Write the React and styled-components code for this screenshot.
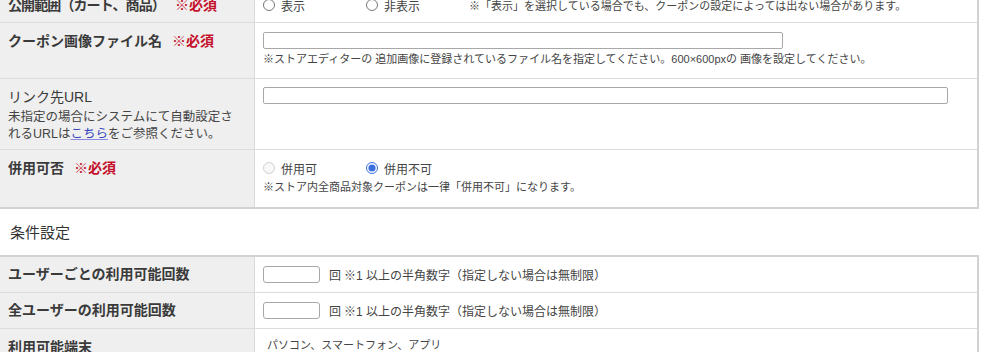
import React from "react";
import styled, { createGlobalStyle } from "styled-components";

const GlobalStyle = createGlobalStyle`
  html, body {
    margin: 0;
    padding: 0;
    background: #ffffff;
  }
  body {
    font-family: "Liberation Sans", "Noto Sans CJK JP", sans-serif;
    color: #333333;
    overflow: hidden;
  }
`;

const App = () => {
  return (
    <Page>
      <GlobalStyle />
      <FormTable>
        <Row>
          <LabelCell>
            <LabelTitle $tight>
              公開範囲（カート、商品）<Required>※必須</Required>
            </LabelTitle>
          </LabelCell>
          <ValueCell>
            <RadioLine>
              <RadioLabel>
                <Radio type="radio" name="open" />
                表示
              </RadioLabel>
              <RadioLabel>
                <Radio type="radio" name="open" />
                非表示
              </RadioLabel>
              <Note>
                ※「表示」を選択している場合でも、クーポンの設定によっては出ない場合があります。
              </Note>
            </RadioLine>
          </ValueCell>
        </Row>
        <Row>
          <LabelCell>
            <LabelTitle>
              クーポン画像ファイル名<Required>※必須</Required>
            </LabelTitle>
          </LabelCell>
          <ValueCell $top={9} $bottom={11}>
            <TextInput $width={520} />
            <NoteBlock>
              ※ストアエディターの 追加画像に登録されているファイル名を指定してください。600×600pxの
              画像を設定してください。
            </NoteBlock>
          </ValueCell>
        </Row>
        <Row>
          <LabelCell $bottom={6}>
            <LabelTitle $light>リンク先URL</LabelTitle>
            <LabelDesc>
              未指定の場合にシステムにて自動設定さ
              <br />
              れるURLは<DescLink href="#">こちら</DescLink>をご参照ください。
            </LabelDesc>
          </LabelCell>
          <ValueCell $top={8}>
            <TextInput $width={685} />
          </ValueCell>
        </Row>
        <Row $last>
          <LabelCell>
            <LabelTitle>
              併用可否<Required>※必須</Required>
            </LabelTitle>
          </LabelCell>
          <ValueCell $top={8} $bottom={12}>
            <RadioLine>
              <RadioLabel>
                <Radio type="radio" name="combo" disabled />
                併用可
              </RadioLabel>
              <RadioLabel>
                <Radio type="radio" name="combo" defaultChecked />
                併用不可
              </RadioLabel>
            </RadioLine>
            <NoteBlock $gap={1}>
              ※ストア内全商品対象クーポンは一律「併用不可」になります。
            </NoteBlock>
          </ValueCell>
        </Row>
      </FormTable>

      <SectionTitle>条件設定</SectionTitle>

      <FormTable $top>
        <Row>
          <LabelCell $top={7} $bottom={8}>
            <LabelTitle>ユーザーごとの利用可能回数</LabelTitle>
          </LabelCell>
          <CountCell>
            <SmallInput />
            <Unit>回</Unit>
            <CountNote>※1 以上の半角数字（指定しない場合は無制限）</CountNote>
          </CountCell>
        </Row>
        <Row>
          <LabelCell $top={7} $bottom={8}>
            <LabelTitle>全ユーザーの利用可能回数</LabelTitle>
          </LabelCell>
          <CountCell>
            <SmallInput />
            <Unit>回</Unit>
            <CountNote>※1 以上の半角数字（指定しない場合は無制限）</CountNote>
          </CountCell>
        </Row>
        <Row>
          <LabelCell>
            <LabelTitle>利用可能端末</LabelTitle>
          </LabelCell>
          <ValueCell $top={8}>
            <PlainText>パソコン、スマートフォン、アプリ</PlainText>
          </ValueCell>
        </Row>
      </FormTable>
    </Page>
  );
};

export default App;

const Page = styled.div`
  width: 1000px;
  margin-top: -13px;
`;

const FormTable = styled.div`
  width: 977px;
  border-right: 2px solid #d2d2d2;
  border-bottom: 2px solid #d2d2d2;
  border-top: ${(p) => (p.$top ? "2px solid #d2d2d2" : "none")};
`;

const Row = styled.div`
  display: grid;
  grid-template-columns: 255px 1fr;
  border-bottom: ${(p) => (p.$last ? "none" : "1px solid #dcdcdc")};
`;

const LabelCell = styled.div`
  background: #efefef;
  border-right: 1px solid #dadada;
  padding: ${(p) => p.$top ?? 8}px 8px ${(p) => p.$bottom ?? 7}px 8px;
`;

const LabelTitle = styled.div`
  font-size: 14px;
  line-height: 20px;
  font-weight: ${(p) => (p.$light ? "normal" : "bold")};
  letter-spacing: ${(p) => (p.$tight ? "-0.9px" : "normal")};
  color: #3a3a3a;
  white-space: nowrap;
`;

const Required = styled.span`
  color: #c4102a;
  margin-left: 10px;
  letter-spacing: normal;
`;

const LabelDesc = styled.div`
  margin-top: 2px;
  font-size: 12.5px;
  line-height: 17px;
  color: #444444;
`;

const DescLink = styled.a`
  color: #3344bb;
  text-decoration: underline;
  text-decoration-color: #8a8ae0;
`;

const ValueCell = styled.div`
  background: #ffffff;
  padding: ${(p) => p.$top ?? 8}px 8px ${(p) => p.$bottom ?? 7}px 8px;
`;

const RadioLine = styled.div`
  display: flex;
  align-items: center;
  height: 20px;
`;

const RadioLabel = styled.label`
  display: flex;
  align-items: center;
  width: 103px;
  font-size: 12px;
  color: #444444;
`;

const Radio = styled.input`
  width: 12px;
  height: 12px;
  margin: 0 6px 0 0;
  accent-color: #3a6fe0;
`;

const Note = styled.span`
  font-size: 11px;
  color: #444444;
  white-space: nowrap;
`;

const NoteBlock = styled.div`
  margin-top: ${(p) => p.$gap ?? 2}px;
  font-size: 11px;
  line-height: 16px;
  color: #444444;
  white-space: nowrap;
`;

const TextInput = styled.input`
  display: block;
  box-sizing: border-box;
  width: ${(p) => p.$width}px;
  height: 17px;
  margin: 0;
  padding: 0 3px;
  border: 1px solid #a8a8a8;
  border-radius: 2px;
  background: #ffffff;
`;

const SectionTitle = styled.div`
  margin: 14px 0 12px 10px;
  font-size: 15px;
  line-height: 20px;
  color: #333333;
`;

const CountCell = styled.div`
  display: flex;
  align-items: center;
  padding: 0 8px;
  background: #ffffff;
`;

const SmallInput = styled.input`
  box-sizing: border-box;
  width: 57px;
  height: 17px;
  margin: 0 9px 0 0;
  padding: 0 3px;
  border: 1px solid #a8a8a8;
  border-radius: 3px;
`;

const Unit = styled.span`
  font-size: 12px;
  color: #444444;
  margin-right: 3px;
`;

const CountNote = styled.span`
  font-size: 12px;
  color: #444444;
  white-space: nowrap;
`;

const PlainText = styled.div`
  margin-left: 4px;
  font-size: 11px;
  line-height: 16px;
  color: #444444;
`;
